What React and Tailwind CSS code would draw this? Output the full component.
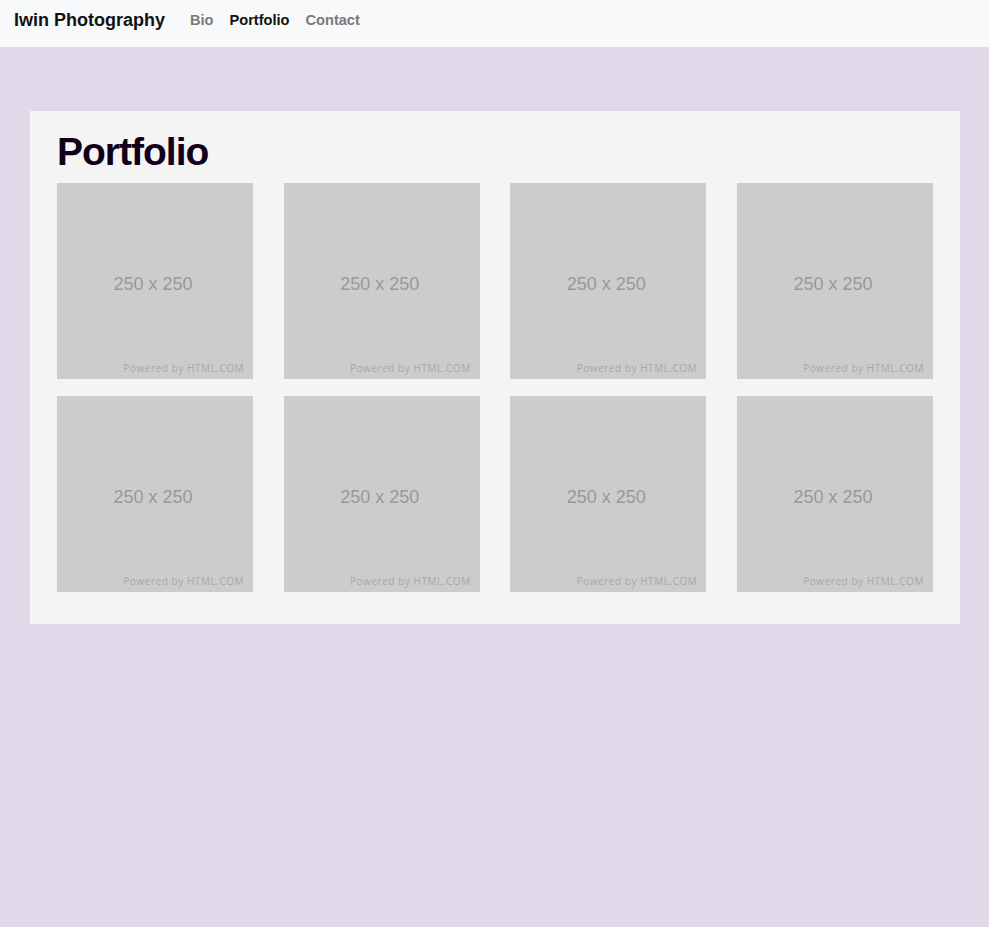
import React from 'react';

const NAV = [
  { label: 'Bio', active: false },
  { label: 'Portfolio', active: true },
  { label: 'Contact', active: false },
];

function Placeholder() {
  return (
    <div className="relative aspect-square w-full bg-[#cccccc] flex items-center justify-center">
      <span className="text-[18px] text-[#999999] font-['Liberation_Sans',Arial,sans-serif] mt-[6px] -ml-[4px]">250 x 250</span>
      <span className="absolute right-[9px] bottom-[3px] text-[10px] tracking-[0.55px] text-[#a8a8a8] font-['Open_Sans','Liberation_Sans',sans-serif]">
        Powered by HTML.COM
      </span>
    </div>
  );
}

export default function App() {
  return (
    <div className="min-h-[927px] bg-[#e1d8e9] font-['Liberation_Sans',Arial,sans-serif]">
      <nav className="h-[47px] bg-[#f8f9fa] flex items-center px-[14px]">
        <span className="text-[18px] font-bold text-[#111111] mr-[25px] -mt-[6px]">Iwin Photography</span>
        <ul className="flex gap-[16px] -mt-[6px]">
          {NAV.map(({ label, active }) => (
            <li
              key={label}
              className={`text-[14.6px] font-bold ${active ? 'text-[#111111]' : 'text-[#7a7a7a]'}`}
            >
              {label}
            </li>
          ))}
        </ul>
      </nav>

      <main className="pl-[30px] pr-[29px] pt-[64px]">
        <section className="bg-[#f4f4f4] px-[27px] pt-[15px] pb-[32px]">
          <h1 className="text-[39px] leading-[52px] mb-[5px] font-bold tracking-[-1px] text-[#10001a]">
            Portfolio
          </h1>
          <div className="grid grid-cols-4 gap-x-[30.5px] gap-y-[17px]">
            {Array.from({ length: 8 }).map((_, i) => (
              <Placeholder key={i} />
            ))}
          </div>
        </section>
      </main>
    </div>
  );
}
